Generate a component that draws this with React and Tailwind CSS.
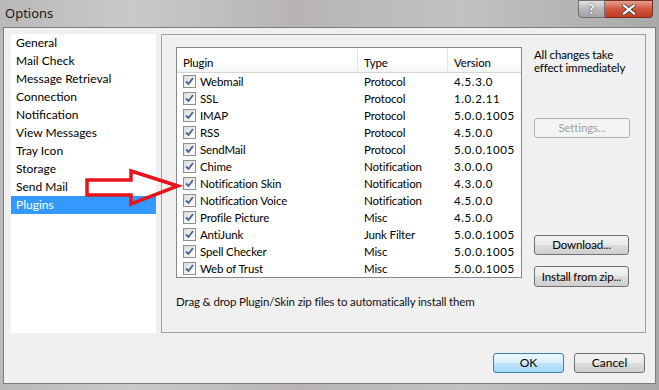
import * as React from "react";

const sections = ["General","Mail Check","Message Retrieval","Connection","Notification","View Messages","Tray Icon","Storage","Send Mail","Plugins"];
const plugins = [
  ["Webmail","Protocol","4.5.3.0"],
  ["SSL","Protocol","1.0.2.11"],
  ["IMAP","Protocol","5.0.0.1005"],
  ["RSS","Protocol","4.5.0.0"],
  ["SendMail","Protocol","5.0.0.1005"],
  ["Chime","Notification","3.0.0.0"],
  ["Notification Skin","Notification","4.3.0.0"],
  ["Notification Voice","Notification","4.5.0.0"],
  ["Profile Picture","Misc","4.5.0.0"],
  ["AntiJunk","Junk Filter","5.0.0.1005"],
  ["Spell Checker","Misc","5.0.0.1005"],
  ["Web of Trust","Misc","5.0.0.1005"],
];

export default function App(){
  return (
    <div className="relative w-[659px] h-[390px] overflow-hidden text-[12px] text-black bg-[linear-gradient(90deg,#b9b9b9,#c9c9c9_20%,#b8b4b4_45%,#c2c2c2_70%,#a9a9a9)]" style={{fontFamily:'Lato,"Noto Sans",sans-serif'}}>
      {/* title bar */}
      <div className="h-[27px] flex items-start">
        <div className="pl-[5px] pt-[4px] text-[13px] text-[#1a1a1a]" style={{fontFamily:'"Noto Sans",sans-serif'}}>Options</div>
        <div className="ml-auto mr-[6px] flex h-[18px]">
          <div className="w-[27px] border border-[#6f6f6f] rounded-bl-[4px] bg-[linear-gradient(#e2e2e2,#b8b8b8_50%,#a3a3a3)] flex items-center justify-center text-white font-bold text-[13px] leading-none" style={{textShadow:"0 0 2px #333"}}>?</div>
          <div className="w-[48px] border border-l-0 border-[#7a2a20] rounded-br-[4px] bg-[linear-gradient(#e5a293,#d0553f_50%,#c23a22)] flex items-center justify-center">
            <svg width="14" height="11" viewBox="0 0 14 11"><path d="M2 1.5L12 9.5M12 1.5L2 9.5" stroke="#3a3a3a" strokeWidth="3.6" strokeLinecap="square"/><path d="M2 1.5L12 9.5M12 1.5L2 9.5" stroke="#fff" strokeWidth="2.2" strokeLinecap="square"/></svg>
          </div>
        </div>
      </div>
      {/* client area */}
      <div className="mx-[3px] h-[357px] border border-[#7d7d7d] bg-[#f0f0f0] flex flex-col">
        <div className="flex gap-[5px] pt-[6px] pl-[7px] pr-[9px]">
          <div className="w-[145px] h-[299px] bg-white">
            {sections.map((s)=>(
              <div key={s} className={"h-[18px] leading-[18px] pl-[5px] " + (s==="Plugins" ? "bg-[#3399ff] text-white" : "")}>{s}</div>
            ))}
          </div>
          <div className="flex-1 h-[299px] border border-[#a0a0a0] flex pt-[12px] pl-[14px] text-[11.5px] tracking-[-0.15px]">
            <div className="flex flex-col">
              <div className="w-[346px] h-[231px] border border-[#828790] bg-white">
                <div className="flex h-[25px] border-b border-[#d5d5d5] bg-[linear-gradient(#ffffff,#ffffff_60%,#f3f4f6)]">
                  <div className="w-[181px] pl-[6px] pt-[6px] border-r border-[#e3e3e3]">Plugin</div>
                  <div className="w-[90px] pl-[6px] pt-[6px] border-r border-[#e3e3e3]">Type</div>
                  <div className="flex-1 pl-[6px] pt-[6px]">Version</div>
                </div>
                {plugins.map(([n,t,v])=>(
                  <div key={n} className="flex h-[17px] leading-[17px]">
                    <div className="w-[181px] pl-[6px] flex items-center gap-[4px]">
                      <Check/>
                      <span>{n}</span>
                    </div>
                    <div className="w-[90px] pl-[6px]">{t}</div>
                    <div className="flex-1 pl-[6px] tracking-[0.6px]">{v}</div>
                  </div>
                ))}
              </div>
              <div className="pt-[15px] text-[#111]">Drag &amp; drop Plugin/Skin zip files to automatically install them</div>
            </div>
            <div className="pl-[12px] flex flex-col">
              <div className="h-[13px] leading-[13px] mt-[1px]">All changes take</div>
              <div className="h-[13px] leading-[13px]">effect immediately</div>
              <Btn className="mt-[44px] w-[96px]" disabled>Settings...</Btn>
              <Btn className="mt-[97px] w-[95px]">Download...</Btn>
              <Btn className="mt-[11px] w-[95px] h-[21px]">Install from zip...</Btn>
            </div>
          </div>
        </div>
        <div className="flex justify-end gap-[10px] pr-[10px] pt-[20px]">
          <button className="w-[71px] h-[20px] rounded-[3px] border border-[#3c7fb1] bg-[linear-gradient(#eaf6fd,#d9f0fc_50%,#bee6fd_50%,#a7d9f5)] leading-none">OK</button>
          <Btn className="w-[71px]">Cancel</Btn>
        </div>
      </div>
      {/* arrow annotation */}
      <svg className="absolute left-0 top-0 pointer-events-none" width="659" height="390">
        <polygon points="87,180 131,180 131,171 178,186 131,204 131,195 87,195" fill="none" stroke="#e8141c" strokeWidth="3.5" strokeLinejoin="miter"/>
      </svg>
    </div>
  );
}

function Check(){
  return (
    <span className="w-[13px] h-[13px] border border-[#8e8f8f] bg-[linear-gradient(135deg,#dcdcdc,#ffffff)] flex items-center justify-center shrink-0">
      <svg width="9" height="9" viewBox="0 0 9 9"><path d="M1 4.5L3.5 7L8 1" fill="none" stroke="#4a5f97" strokeWidth="1.8"/></svg>
    </span>
  );
}

function Btn({children,className="",disabled=false}){
  return (
    <button className={"h-[20px] rounded-[3px] border leading-none " + (disabled ? "border-[#adb2b5] bg-[#f4f4f4] text-[#a0a0a0] " : "border-[#707070] bg-[linear-gradient(#f2f2f2,#ebebeb_50%,#dddddd_50%,#cfcfcf)] ") + className}>{children}</button>
  );
}
